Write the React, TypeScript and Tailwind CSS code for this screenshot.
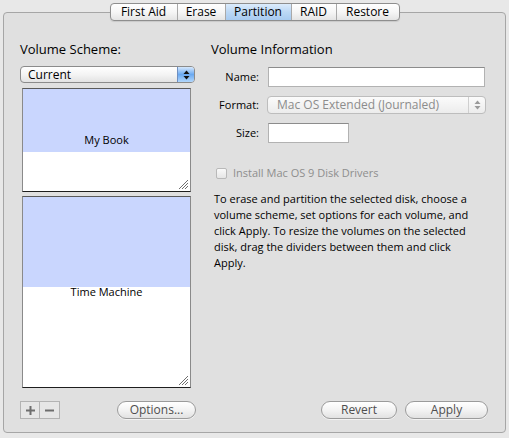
import React from "react";

const tabs = [
  { label: "First Aid", w: "w-[66px]" },
  { label: "Erase", w: "w-[48px]" },
  { label: "Partition", w: "w-[66px]", active: true },
  { label: "RAID", w: "w-[45px]" },
  { label: "Restore", w: "w-[63px]" },
];

function Grip() {
  return (
    <svg className="absolute right-[1px] bottom-[1px]" width="11" height="11" viewBox="0 0 11 11">
      <path d="M10 1 L1 10 M10 4 L4 10 M10 7 L7 10" stroke="#6f6f6f" strokeWidth="1" />
      <path d="M10 2 L2 10 M10 5 L5 10 M10 8 L8 10" stroke="#ffffff" strokeWidth="1" />
    </svg>
  );
}

function Partition({ name, blue, h }: { name: string; blue: string; h: string }) {
  return (
    <div className={`relative ${h} flex flex-col border-x border-[#8a8a8a] border-t border-t-[#5a5a5a] border-b border-b-[#1e1e1e] bg-white`}>
      <div className={`${blue} bg-[#c9d6fe]`} />
      <div className="absolute inset-0 flex items-center justify-center text-[11px] text-black">{name}</div>
      <Grip />
    </div>
  );
}

function Arrows({ color }: { color: string }) {
  return (
    <svg width="7" height="10" viewBox="0 0 7 10">
      <path d="M3.5 0.5 L6.5 4 L0.5 4 Z" fill={color} />
      <path d="M3.5 9.5 L6.5 6 L0.5 6 Z" fill={color} />
    </svg>
  );
}

function PillButton({ label, w }: { label: string; w: string }) {
  return (
    <div className={`${w} h-[18px] rounded-full border border-[#9b9b9b] bg-gradient-to-b from-white via-[#f3f3f3] to-[#e2e2e2] flex items-center justify-center text-[12px] text-[#4e4e4e] shadow-[0_1px_0_rgba(255,255,255,0.6)]`}>
      {label}
    </div>
  );
}

export default function App() {
  return (
    <div className="w-[509px] h-[438px] bg-[#e8e8e8] pt-[3px] overflow-hidden font-['Open_Sans','Liberation_Sans',sans-serif] text-black">
      {/* segmented tab control */}
      <div className="relative z-10 flex justify-center">
        <div className="flex h-[18px] rounded-[4px] border border-[#8e8e8e] overflow-hidden bg-gradient-to-b from-white via-[#f6f6f6] to-[#e4e4e4] shadow-[0_1px_1px_rgba(0,0,0,0.1)]">
          {tabs.map((t, i) => (
            <div
              key={t.label}
              className={`${t.w} flex items-center justify-center text-[12px] leading-none ${i > 0 ? "border-l border-[#a9a9a9]" : ""} ${
                t.active ? "bg-gradient-to-b from-[#dcecfc] via-[#bcd8f5] to-[#a8cbf1]" : ""
              }`}
            >
              {t.label}
            </div>
          ))}
        </div>
      </div>

      <div className="mx-[3px] -mt-[9px] h-[421px] rounded-[4px] border border-[#a6a6a6] bg-[#e0e0e0] flex pl-[16px] pt-[28px] pb-[13px]">
        {/* left column */}
        <div className="w-[175px] flex flex-col">
          <div className="text-[13px] leading-[16px]">Volume Scheme:</div>
          <div className="mt-[9px] h-[17px] rounded-[4px] border border-[#8b8b8b] flex overflow-hidden bg-gradient-to-b from-white via-[#f4f4f4] to-[#e3e3e3]">
            <div className="flex-1 pl-[7px] text-[12px] leading-[15px]">Current</div>
            <div className="w-[17px] border-l border-[#6f8fc0] flex items-center justify-center bg-gradient-to-b from-[#d6e8fc] via-[#6aa9f1] to-[#b2d7fc]">
              <Arrows color="#111" />
            </div>
          </div>
          <div className="mt-[5px] ml-[2px] w-[169px] flex flex-col gap-[4px]">
            <Partition name="My Book" blue="h-[63px]" h="h-[104px]" />
            <Partition name="Time Machine" blue="h-[90px]" h="h-[192px]" />
          </div>
          <div className="mt-auto flex items-center">
            <div className="flex h-[18px] border border-[#b3b3b3] bg-[#e6e6e6]">
              <div className="w-[19px] flex items-center justify-center border-r border-[#b3b3b3]">
                <svg width="9" height="9" viewBox="0 0 9 9">
                  <path d="M0 4.5 H9 M4.5 0 V9" stroke="#6e6e6e" strokeWidth="2" />
                </svg>
              </div>
              <div className="w-[19px] flex items-center justify-center">
                <svg width="9" height="9" viewBox="0 0 9 9">
                  <path d="M0 4.5 H9" stroke="#6e6e6e" strokeWidth="2" />
                </svg>
              </div>
            </div>
            <div className="ml-[57px]">
              <PillButton label="Options..." w="w-[79px]" />
            </div>
          </div>
        </div>

        {/* right column */}
        <div className="ml-[13px] w-[280px] flex flex-col">
          <div className="ml-[3px] text-[13px] leading-[16px]">Volume Information</div>
          <div className="mt-[10px] flex items-center">
            <div className="w-[51px] text-right text-[11px]">Name:</div>
            <div className="ml-[9px] w-[217px] h-[20px] bg-white border border-[#b2b2b2] border-t-[#8c8c8c]" />
          </div>
          <div className="mt-[9px] flex items-center">
            <div className="w-[51px] text-right text-[11px]">Format:</div>
            <div className="ml-[8px] w-[219px] h-[18px] rounded-[4px] border border-[#bdbdbd] flex bg-gradient-to-b from-[#fbfbfb] to-[#ececec]">
              <div className="flex-1 pl-[9px] text-[12px] leading-[16px] text-[#8c8c8c]">Mac OS Extended (Journaled)</div>
              <div className="w-[17px] border-l border-[#cfcfcf] flex items-center justify-center">
                <Arrows color="#9a9a9a" />
              </div>
            </div>
          </div>
          <div className="mt-[9px] flex items-center">
            <div className="w-[51px] text-right text-[11px]">Size:</div>
            <div className="ml-[9px] w-[81px] h-[20px] bg-white border border-[#b2b2b2] border-t-[#8c8c8c]" />
          </div>
          <div className="mt-[22px] ml-[8px] flex items-center h-[16px]">
            <div className="w-[11px] h-[11px] rounded-[2px] border border-[#b9b9b9] bg-gradient-to-b from-[#fafafa] to-[#e6e6e6]" />
            <div className="ml-[6px] text-[11px] text-[#8e8e8e]">Install Mac OS 9 Disk Drivers</div>
          </div>
          <p className="mt-[10px] ml-[6px] w-[266px] text-[11px] leading-[16px]">
            To erase and partition the selected disk, choose a volume scheme, set options for each volume, and click
            Apply. To resize the volumes on the selected disk, drag the dividers between them and click Apply.
          </p>
          <div className="mt-auto flex justify-end gap-[8px]">
            <PillButton label="Revert" w="w-[76px]" />
            <PillButton label="Apply" w="w-[83px]" />
          </div>
        </div>
      </div>
    </div>
  );
}
